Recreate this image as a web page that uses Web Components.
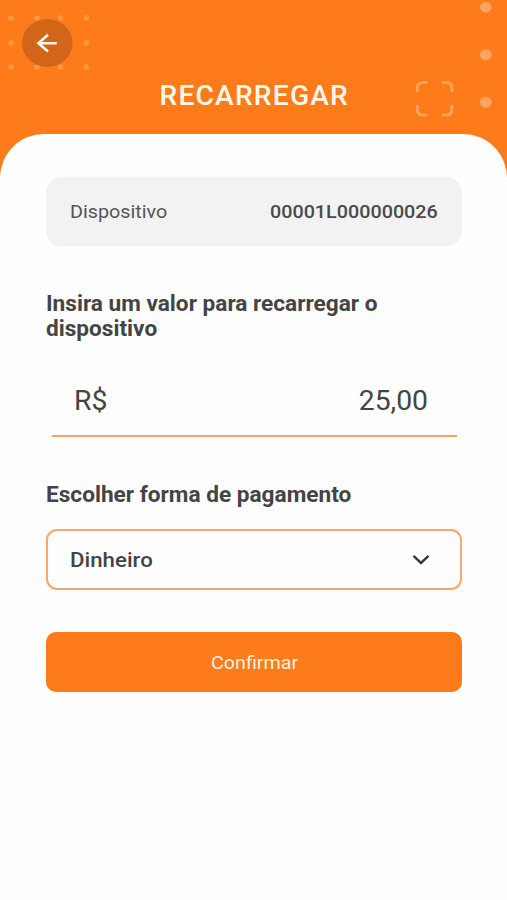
<!DOCTYPE html>
<html lang="pt-BR">
<head>
<meta charset="utf-8">
<title>Recarregar</title>
<style>
html,body{margin:0;height:100%}
body{font-family:Roboto,"Liberation Sans",sans-serif;color:#444;background:#fefefe;overflow:hidden}
</style>
</head>
<body>
<recharge-page></recharge-page>
<script>
const define = (name, html) => {
  const template = document.createElement('template');
  template.innerHTML = html;
  customElements.define(name, class extends HTMLElement {
    constructor() {
      super();
      this.attachShadow({mode: 'open'}).append(template.content.cloneNode(true));
    }
  });
};

// Text set slightly wide; --origin keeps the chosen edge in place.
define('wide-text', `
<style>
:host{display:block;white-space:nowrap;transform:scaleX(var(--stretch,1.05));transform-origin:var(--origin,left) center}
</style><slot></slot>`);

define('back-button', `
<style>
:host{display:block;width:51px;height:48px}
svg{display:block}
</style>
<svg width="51" height="48" viewBox="0 0 51 48" role="img" aria-label="Voltar">
<ellipse cx="25.3" cy="24" rx="25.3" ry="24" fill="#cc6218" fill-opacity=".86"/>
<path d="M34.8 24.3H16.5M26 15.8L16.4 24.3L26 32.5" fill="none" stroke="#fffaf0" stroke-width="2.5"/>
</svg>`);

define('page-header', `
<style>
:host{display:block;position:relative;height:134px;background:#fe7b1b;color:#fff8ea}
.decor{position:absolute;inset:0}
back-button{position:absolute;left:22px;top:19px}
h1{margin:0;padding:80px 0 0 1px;font-size:26.8px;line-height:32px;font-weight:500;letter-spacing:1.15px;display:flex;justify-content:center}
wide-text{--origin:center}
</style>
<svg class="decor" width="507" height="134" viewBox="0 0 507 134" aria-hidden="true">
<g fill="#ff9845">
<circle cx="11" cy="18" r="2.8"/><circle cx="37" cy="18" r="2.8"/><circle cx="60.5" cy="18" r="2.8"/><circle cx="86.3" cy="18" r="2.8"/>
<circle cx="11" cy="42.7" r="2.8"/><circle cx="37" cy="42.7" r="2.8"/><circle cx="60.5" cy="42.7" r="2.8"/><circle cx="86.3" cy="42.7" r="2.8"/>
<circle cx="11" cy="67" r="2.8"/><circle cx="37" cy="67" r="2.8"/><circle cx="60.5" cy="67" r="2.8"/><circle cx="86.3" cy="67" r="2.8"/>
</g>
<g fill="#ffa460"><ellipse cx="485.8" cy="7.2" rx="5.8" ry="5.5"/><ellipse cx="485.8" cy="54.7" rx="5.8" ry="5.5"/><ellipse cx="485.8" cy="102.2" rx="5.8" ry="5.5"/></g>
<path d="M417.3 92V88Q417.3 82.5 423 82.5H427.5M441.5 82.5H446Q451.9 82.5 451.9 88V92M451.9 105V109.5Q451.9 115 446 115H441.5M427.5 115H423Q417.3 115 417.3 109.5V105" fill="none" stroke="#ffa761" stroke-width="2.7"/>
</svg>
<back-button></back-button>
<h1><wide-text><slot></slot></wide-text></h1>`);

define('device-card', `
<style>
:host{display:flex;justify-content:space-between;align-items:center;box-sizing:border-box;height:69px;padding:2px 24px 0;border-radius:15px;background:#f2f2f2;color:#555;font-size:18.7px;line-height:24px}
wide-text{--stretch:1.057}
.id{font-weight:500;color:#4a4a4a;--origin:right}
</style>
<wide-text><slot name="label"></slot></wide-text>
<wide-text class="id"><slot name="value"></slot></wide-text>`);

define('section-title', `
<style>
:host{display:block;font-weight:700;font-size:21.2px;line-height:25px;color:#444}
</style><slot></slot>`);

define('amount-field', `
<style>
:host{display:flex;justify-content:space-between;align-items:center;box-sizing:border-box;height:72px;margin:0 5.5px;padding:3px 28.5px 0 22.5px;border-bottom:2px solid #f8a268;font-size:27px;line-height:32px}
.value{--origin:right}
</style>
<wide-text><slot name="currency"></slot></wide-text>
<wide-text class="value"><slot></slot></wide-text>`);

define('select-field', `
<style>
:host{display:flex;justify-content:space-between;align-items:center;box-sizing:border-box;height:61px;padding:1px 30px 0 22px;border:2px solid #f9a66c;border-radius:11px;font-size:21px;font-weight:500;line-height:26px}
wide-text{--stretch:1.06}
</style>
<wide-text><slot></slot></wide-text>
<svg width="18" height="12" viewBox="0 0 18 12" aria-hidden="true"><path d="M1.5 1.8L9 9L16.5 1.8" fill="none" stroke="#3c3c3c" stroke-width="2.5"/></svg>`);

define('confirm-button', `
<style>
:host{display:flex;align-items:center;justify-content:center;box-sizing:border-box;height:60px;padding:2px 0 0 1px;border-radius:10px;background:#fe7b1b;color:#fff1df;font-size:18.8px;line-height:24px}
wide-text{--origin:center}
</style><wide-text><slot></slot></wide-text>`);

define('recharge-page', `
<style>
:host{display:flex;flex-direction:column;height:100%;background:#fe7b1b}
main{flex:1;display:flex;flex-direction:column;box-sizing:border-box;padding:42.5px 45px 0 46px;border-radius:44px 44px 0 0;background:#fefefe}
section-title{--stretch:1.068}
.amount{margin-top:45.5px}
amount-field{margin-top:23.6px}
.payment{margin-top:45px}
select-field{margin-top:22px}
confirm-button{margin-top:42px}
</style>
<page-header>RECARREGAR</page-header>
<main>
<device-card><span slot="label">Dispositivo</span><span slot="value">00001L000000026</span></device-card>
<section-title class="amount"><wide-text>Insira um valor para recarregar o</wide-text><wide-text>dispositivo</wide-text></section-title>
<amount-field><span slot="currency">R$</span>25,00</amount-field>
<section-title class="payment"><wide-text>Escolher forma de pagamento</wide-text></section-title>
<select-field>Dinheiro</select-field>
<confirm-button>Confirmar</confirm-button>
</main>`);
</script>
</body>
</html>
